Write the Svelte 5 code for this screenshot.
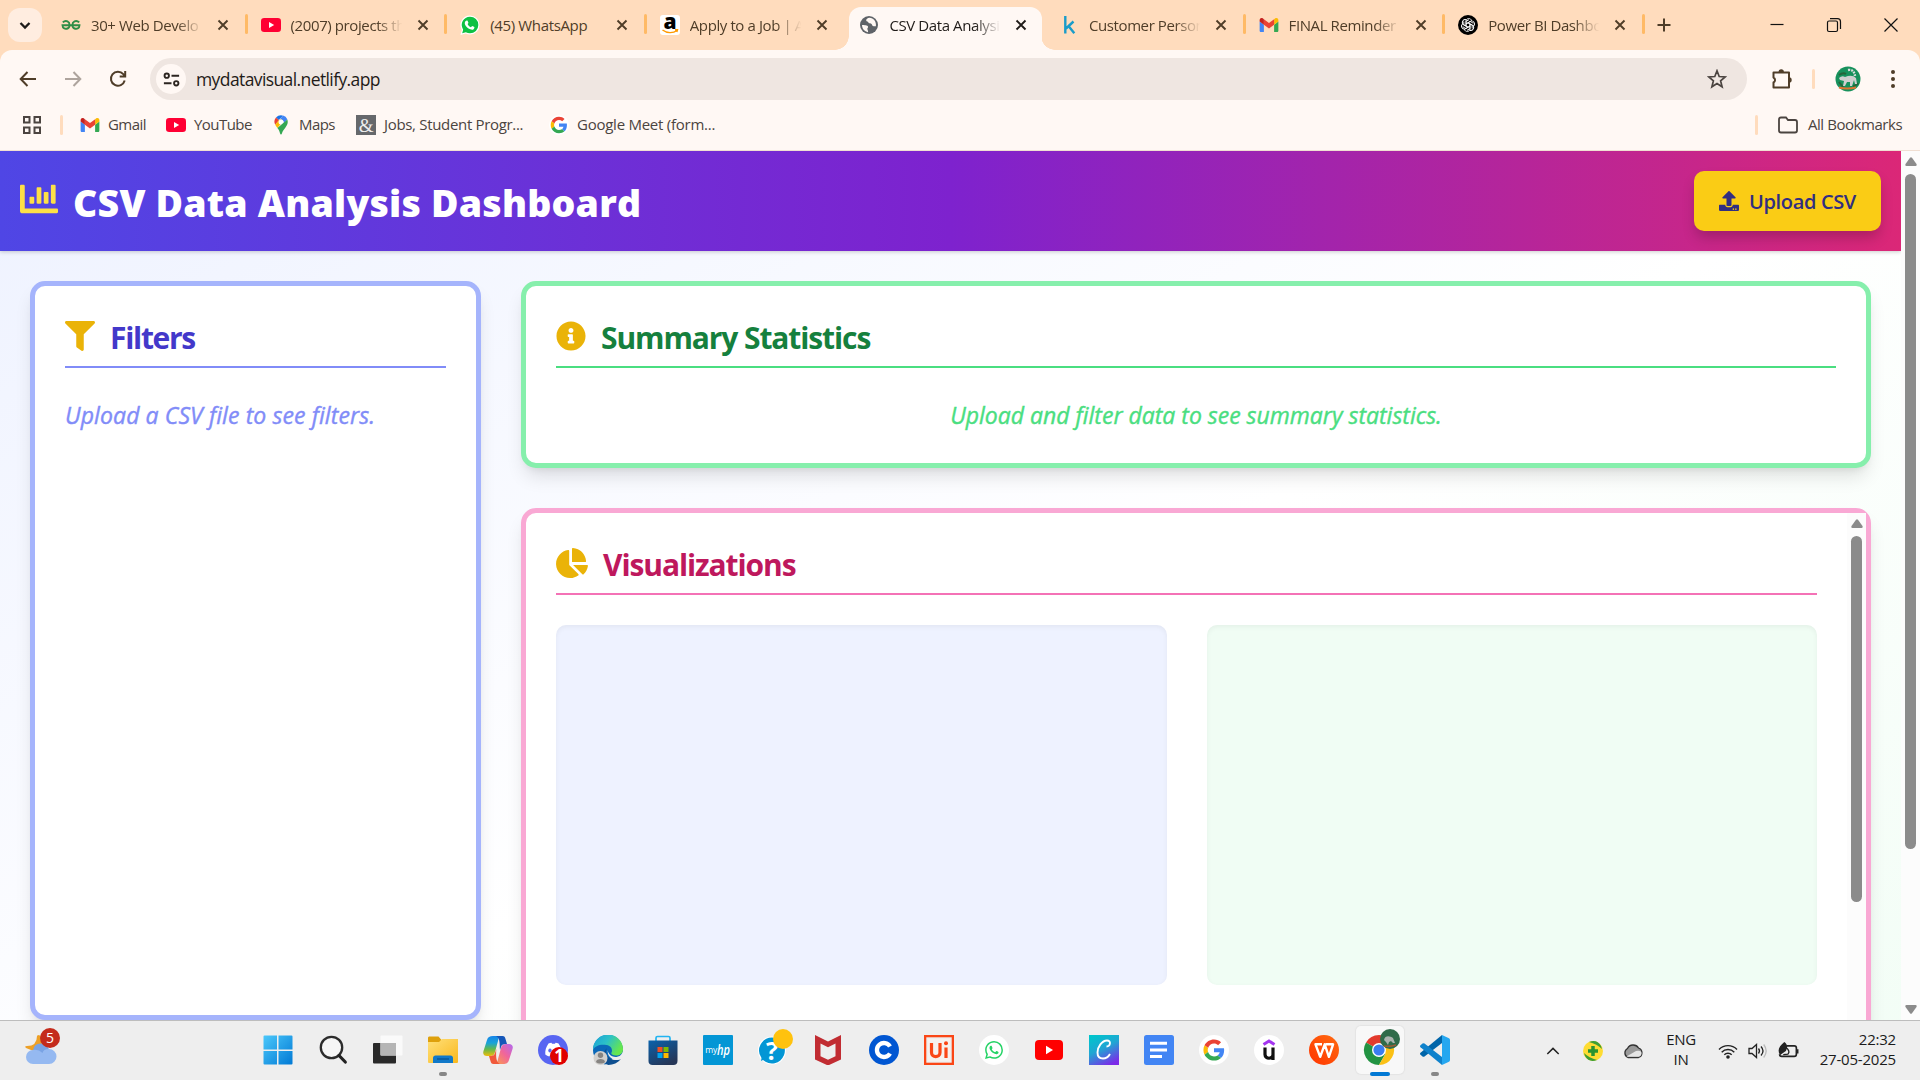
<script>
  const tabs = [
    { icon: 'gfg', title: '30+ Web Develo', sep: true },
    { icon: 'youtube', title: '(2007) projects th', sep: true },
    { icon: 'whatsapp', title: '(45) WhatsApp', sep: true, whole: true },
    { icon: 'amazon', title: 'Apply to a Job | A' },
    { icon: 'globe', title: 'CSV Data Analysi', active: true },
    { icon: 'kaggle', title: 'Customer Person', sep: true },
    { icon: 'gmail', title: 'FINAL Reminder', sep: true },
    { icon: 'openai', title: 'Power BI Dashbo', sep: true }
  ];
  const bookmarks = [
    { icon: 'gmail', title: 'Gmail', cls: 'b-gmail' },
    { icon: 'youtube', title: 'YouTube', cls: 'b-youtube' },
    { icon: 'maps', title: 'Maps', cls: 'b-maps' },
    { icon: 'jobs', title: 'Jobs, Student Progr...', cls: 'b-jobs' },
    { icon: 'google', title: 'Google Meet (form...', cls: 'b-meet' }
  ];
  const apps = ['windows', 'search', 'taskview', 'explorer', 'copilot', 'discord', 'edge', 'store', 'myhp', 'help', 'mcafee', 'coursera', 'uipath', 'wa-round', 'yt-wide', 'canva', 'docs', 'g-round', 'udemy', 'wps', 'chrome', 'vscode'];
</script>

{#snippet icon(name)}
  {#if name === 'gfg'}
    <svg class="fav" viewBox="0 0 20 20"><g fill="none" stroke="#2f8d46" stroke-width="1.9"><path d="M1.800 7.400C3.200 6 5 5.600 6.500 6.300 9.300 7.600 9.300 12.400 6.500 13.500 3.800 14.500 1.600 13 1.500 10.200H18.500C18.400 13 16.200 14.500 13.500 13.500 10.700 12.400 10.700 7.600 13.500 6.300 15 5.600 16.800 6 18.200 7.400"/></g></svg>
  {:else if name === 'youtube'}
    <svg class="fav" viewBox="0 0 20 20"><rect y="3" width="20" height="14" rx="3.200" fill="#ff0033"/><path d="M8 7v6l5.200-3z" fill="#fff"/></svg>
  {:else if name === 'yt-wide'}
    <svg viewBox="0 0 30 30"><rect x="1" y="5" width="28" height="20" rx="4" fill="#f00"/><path d="M12 10.800v8.400l7-4.200z" fill="#fff"/></svg>
  {:else if name === 'whatsapp'}
    <svg class="fav" viewBox="0 0 24 24"><path d="M12 .5A11.500 11.500 0 0 1 12 23.500a11 11 0 0 1-5.200-1.300L.5 23.900l1.700-6A11.500 11.500 0 0 1 12 .5z" fill="#fff"/><path d="M12 2A10 10 0 0 1 12 22a10 10 0 0 1-5-1.400L2.600 21.800l1.200-4.200A10 10 0 0 1 12 2z" fill="#0dc143"/><path d="M8.200 6.500c.6 0 .8.100 1 .6l.9 2.100c.1.500-.8 1.300-1 1.700.7 1.700 2.200 3.100 4 3.800.5-.1 1.100-1.500 1.600-1.500.6.100 2.200 1 2.500 1.200.3.400-.1 2-.9 2.600-.7.600-2 .8-3 .5-3.800-1.100-6.300-3.700-7.400-6.500-.6-1.800.3-4.500 2.300-4.500z" fill="#fff"/></svg>
  {:else if name === 'amazon'}
    <svg class="fav" viewBox="0 0 20 20"><rect width="20" height="20" rx="3" fill="#fff"/><text x="10" y="13.500" text-anchor="middle" class="glyph" font-size="21" font-weight="800">a</text><path d="M2.500 15c4.500 3.400 10.500 3.400 14.500.5M15 14.800l2.500-.1-.7 2.300" fill="none" stroke="#f90" stroke-width="1.400"/></svg>
  {:else if name === 'globe'}
    <svg class="fav" viewBox="0 0 20 20"><circle cx="10" cy="10" r="9" fill="#5f6368"/><path d="M3 10c2.500.2 5.500 0 6 1.500.3 1.500-1 1.500-.6 2.700.3 1 1 1.800.6 3C5.500 16.500 3 13.500 3 10zM10.500 2.800c-2 .3-3.500 1.400-3.300 2.700.3 1.200 1.800.7 2.200 1.900.4 1.500 2.400.3 3.200 1.700.6 1 .7 2.200 2.100 2.200h2.200C17.600 6.500 14.500 3 10.500 2.800z" fill="#fff8f4"/></svg>
  {:else if name === 'kaggle'}
    <svg class="fav" viewBox="0 0 20 20"><path d="M6.300 1v17.500M14.500 6.500l-7.500 7M9.500 11l5.800 7.300" stroke="#1a9cc9" stroke-width="2.400" fill="none"/></svg>
  {:else if name === 'gmail'}
    <svg class="fav" viewBox="49 36 94 78"><path fill="#4285f4" d="M58 108h14V74L52 59v43c0 3.320 2.690 6 6 6"/><path fill="#34a853" d="M120 108h14c3.320 0 6-2.690 6-6V59l-20 15"/><path fill="#fbbc04" d="M120 48v26l20-15v-8c0-7.420-8.470-11.650-14.400-7.200"/><path fill="#ea4335" d="M72 74V48l24 18 24-18v26L96 92"/><path fill="#c5221f" d="M52 51v8l20 15V48l-5.600-4.200c-5.940-4.450-14.400-.22-14.400 7.200"/></svg>
  {:else if name === 'openai'}
    <svg class="fav" viewBox="0 0 20 20"><circle cx="10" cy="10" r="10" fill="#000"/><g fill="none" stroke="#fff" stroke-width=".9">{#each [0, 60, 120, 180, 240, 300] as a}<path transform="rotate({a} 10 10)" d="M8 11V6.200C8 2.800 13 2.500 13.600 5.800M8 8.900l4.200-2.400 3 1.700"/>{/each}</g></svg>
  {:else if name === 'maps'}
    <svg class="fav" viewBox="0 0 20 20"><path d="M10 .3a6.600 6.600 0 0 0-5 2.300L7.700 5 12 .7A6 6 0 0 0 10 .3z" fill="#1a73e8"/><path d="M5 2.600a6.500 6.500 0 0 0-.8 7.200L8 5.300z" fill="#ea4335"/><path d="M12 .6 7.800 5.500a2.900 2.900 0 0 1 4.500 3.600l4-4.800A6.600 6.600 0 0 0 12 .6z" fill="#4285f4"/><path d="M4.200 9.800c.5 1 1.300 2 2.200 3.200l5.900-7a2.900 2.900 0 0 0-4.500-.7z" fill="#fbbc04"/><circle cx="10" cy="7" r="2.500" fill="#fff"/><path d="M16.400 4.500c1 3.500-.2 5.700-2.100 8.200-2 2.600-2.800 3.500-3.300 5.600-.4 1.700-1.600 1.700-2 0-.4-2-1.200-3.400-2.600-5.300z" fill="#34a853"/></svg>
  {:else if name === 'jobs'}
    <svg class="fav" viewBox="0 0 20 20"><rect width="20" height="20" fill="#66686b"/><text x="10" y="16.500" text-anchor="middle" class="serif" font-size="19">&amp;</text></svg>
  {:else if name === 'google' || name === 'g-round'}
    <svg class="fav" viewBox={name === 'google' ? '-5 -5 58 58' : '-10 -10 68 68'}>{#if name === 'g-round'}<circle cx="24" cy="24" r="34" fill="#fff"/>{:else}<circle cx="24" cy="24" r="29" fill="#fff"/>{/if}<path fill="#ea4335" d="M24 9.500c3.540 0 6.710 1.220 9.210 3.600l6.850-6.850C35.900 2.380 30.470 0 24 0 14.620 0 6.510 5.380 2.560 13.220l7.980 6.190C12.430 13.720 17.740 9.500 24 9.500z"/><path fill="#4285f4" d="M46.980 24.550c0-1.570-.15-3.090-.38-4.550H24v9.020h12.940c-.58 2.960-2.260 5.480-4.780 7.180l7.730 6c4.510-4.180 7.090-10.360 7.090-17.650z"/><path fill="#fbbc05" d="M10.530 28.590c-.48-1.450-.76-2.990-.76-4.590s.27-3.140.76-4.590l-7.980-6.190C.92 16.460 0 20.120 0 24c0 3.880.92 7.540 2.560 10.780l7.970-6.190z"/><path fill="#34a853" d="M24 48c6.480 0 11.930-2.130 15.890-5.810l-7.730-6c-2.150 1.450-4.920 2.300-8.160 2.300-6.260 0-11.570-4.220-13.470-9.910l-7.980 6.190C6.510 42.620 14.620 48 24 48z"/></svg>
  {:else if name === 'windows'}
    <svg viewBox="0 0 30 30"><defs><linearGradient id="win" x1="0" y1="0" x2="1" y2="1" gradientUnits="objectBoundingBox"><stop stop-color="#4cc9fb"/><stop offset="1" stop-color="#0078d4"/></linearGradient><mask id="winm"><path d="M.5 1.500a1 1 0 0 1 1-1H14v14H.5zM15.500.5h13a1 1 0 0 1 1 1v13h-14zM.5 16H14v13.500H1.500a1 1 0 0 1-1-1zM15.500 16h14v12.500a1 1 0 0 1-1 1h-13z" fill="#fff"/></mask></defs><rect width="30" height="30" fill="url(#win)" mask="url(#winm)"/></svg>
  {:else if name === 'search'}
    <svg viewBox="0 0 30 30"><circle cx="13.500" cy="12.500" r="10.700" fill="#f6f6f6" stroke="#2c2c2c" stroke-width="2.300"/><path d="m21 20.500 6.300 6.500" stroke="#222" stroke-width="3.200" stroke-linecap="round"/></svg>
  {:else if name === 'taskview'}
    <svg viewBox="0 0 30 30"><rect y="8" width="23" height="20.500" rx="1" fill="#292929"/><rect x="7.500" y=".5" width="22" height="20" rx="1" fill="#fafafa"/><path d="M7.500 8H23v12.500H7.500z" fill="#b5b5b5"/></svg>
  {:else if name === 'explorer'}
    <svg viewBox="0 0 30 30"><defs><linearGradient id="fold" x1="0" y1="0" x2="1" y2="1"><stop stop-color="#ffe07a"/><stop offset="1" stop-color="#f9b81c"/></linearGradient></defs><path d="M0 3c0-1 .7-1.500 1.500-1.500h9L13.500 5H29v4H0z" fill="#dea00c"/><path d="M0 7h11l3-3h16v22.500c0 1-.5 1.500-1.500 1.500h-27C.5 28 0 27.500 0 26.500z" fill="url(#fold)"/><path d="M5 28v-5c0-1.500 1-2.500 2.500-2.500h15c1.500 0 2.500 1 2.500 2.500v5z" fill="#1179c9"/><path d="M9 24h12" stroke="#07508d" stroke-width="1.200"/></svg>
  {:else if name === 'copilot'}
    <svg viewBox="0 0 30 30"><defs><linearGradient id="cp1" x1="0" y1="0" x2="0" y2="1"><stop stop-color="#1684e8"/><stop offset=".35" stop-color="#18a3d9"/><stop offset=".65" stop-color="#60b84e"/><stop offset="1" stop-color="#efbc0a"/></linearGradient><linearGradient id="cp2" x1="1" y1="0" x2="0" y2="1"><stop stop-color="#b26af0"/><stop offset=".45" stop-color="#f0659b"/><stop offset="1" stop-color="#fca343"/></linearGradient></defs><path d="M19.500 1c-4 0-4 3-4.500 5l-3 11c-.8 3-2 4-5 4H4c-3 0-4.500-2-3.500-5L4 5c1-3 2.500-4 6-4z" fill="url(#cp1)"/><path d="M10.500 29c3.500 0 4-2.500 4.500-5l3-11c.8-3 2-4 5-4h3c3 0 4.500 2 3.500 5L26 25c-1 3-2.500 4-6 4z" fill="url(#cp2)"/><path d="M13 1h6.500c2 0 2.500 1 3 3l1.500 5c-3.500 0-5 0-6 3l-1 3c-.5-5 .5-12-4-14z" fill="#1556b8"/><path d="M17 29h-6.500c-2 0-2.500-1-3-3L6 21c3.500 0 5 0 6-3l1.300-4C13 20 12.500 27 17 29z" fill="#f0593b"/></svg>
  {:else if name === 'discord'}
    <svg viewBox="0 0 30 30"><circle cx="15" cy="15" r="15" fill="#5865f2"/><path d="M10.500 8.500c1-.5 2-.7 3-.8l.5 1h3l.5-1c1 .1 2 .3 3 .8 2.500 3.500 3.500 7 3.300 11-1.300 1-2.500 1.500-4 2l-1-1.700c-2 .5-4.500.5-6.500 0l-1 1.700c-1.500-.5-2.800-1-4-2-.3-4 .7-7.500 3.200-11z" fill="#fff"/><ellipse cx="12" cy="15.500" rx="1.700" ry="2" fill="#5865f2"/><circle cx="21" cy="21" r="9" fill="#e00000"/><text x="21" y="27" text-anchor="middle" class="badge-num" font-size="17" font-weight="700">1</text></svg>
  {:else if name === 'edge'}
    <svg viewBox="0 0 30 30"><defs><linearGradient id="eg1" x1="0" y1="0" x2="1" y2=".5"><stop stop-color="#199fd9"/><stop offset=".5" stop-color="#2cc0c8"/><stop offset="1" stop-color="#66e74d"/></linearGradient></defs><circle cx="15" cy="15" r="15" fill="#0b68b9"/><path d="M21 22c4 1 8-2 9-6v14H12z" fill="#eee"/><path d="M0 15A15 15 0 0 1 30 14c.2 4-3 6.500-7 6.500-3.500 0-5.500-1.500-4.500-3 1-1.300 1-6.500-5-7.500C7 9 1.500 11 0 15z" fill="url(#eg1)"/><path d="M14 13c-3 5 1 12 9 12 2 0 4-.5 5-1.200C25 28 20 30 15.500 30 9 29 8 18 14 13z" fill="#0f4f90"/><path d="M15 14c-1 3.500 2.500 8 8 8 2.500 0 4.500-.8 6-1.500L28 24c-7 3-15-2-13-10z" fill="#eee"/><circle cx="7.500" cy="23" r="7" fill="#d2d0ce"/><circle cx="7.500" cy="20.300" r="2.700" fill="#868482"/><path d="M3 27c0-4 9-4 9 0-2 2-7 2-9 0z" fill="#868482"/></svg>
  {:else if name === 'store'}
    <svg viewBox="0 0 30 30"><defs><linearGradient id="st" x1="0" y1="0" x2=".6" y2="1"><stop stop-color="#0a62ac"/><stop offset="1" stop-color="#263758"/></linearGradient></defs><path d="M8 6V3c0-1 .5-1.500 1.500-1.500h11c1 0 1.500.5 1.500 1.500v3" fill="none" stroke="#22b4f1" stroke-width="1.700"/><path d="M.5 5.500h29V26c0 2.500-1.500 4-4 4h-21c-2.500 0-4-1.500-4-4z" fill="url(#st)"/><path fill="#f25022" d="M9.500 12h5v5h-5z"/><path fill="#7fba00" d="M15.500 12h5v5h-5z"/><path fill="#00a4ef" d="M9.500 18h5v5h-5z"/><path fill="#ffb900" d="M15.500 18h5v5h-5z"/></svg>
  {:else if name === 'myhp'}
    <svg viewBox="0 0 30 30"><rect width="30" height="30" rx="1" fill="#0396d5"/><text x="2.300" y="18" class="white" font-size="8.500" textLength="12">my</text><text x="14" y="20" class="white" font-size="15" font-style="italic" font-weight="600" textLength="13" lengthAdjust="spacingAndGlyphs">hp</text></svg>
  {:else if name === 'help'}
    <svg class="spill" viewBox="0 0 30 30"><circle cx="14" cy="15.500" r="14" fill="#fff"/><path d="M14 2.500a13 13 0 1 1-9 22.500L3 26l.5-3A13 13 0 0 1 14 2.500z" fill="#0396d5"/><text x="14" y="24.500" text-anchor="middle" class="white" font-size="25" font-weight="700">?</text><circle cx="25" cy="4" r="10" fill="#ffc20e"/></svg>
  {:else if name === 'mcafee'}
    <svg viewBox="0 0 30 30"><path d="M2 0 15 6.500 28 0v24.500L15 30.500 2 24.500zM7.500 8.500v12.700L15 24.700l7.500-3.500V8.500L15 12.200z" fill="#c12c32" fill-rule="evenodd"/></svg>
  {:else if name === 'coursera'}
    <svg viewBox="0 0 30 30"><circle cx="15" cy="15" r="15" fill="#0056d2"/><path d="M21 11.500a7 7 0 1 0 0 7" fill="none" stroke="#fff" stroke-width="4.300"/></svg>
  {:else if name === 'uipath'}
    <svg viewBox="0 0 30 30"><rect width="30" height="30" fill="#fa4616"/><rect x="2.300" y="2.300" width="25.400" height="25.400" fill="#eee"/><rect x="4" y="4" width="22" height="22" fill="#f6f1ee"/><path d="M7.500 8v9.500c0 5.500 8.500 5.500 8.500 0V8M22 12.500V23" fill="none" stroke="#fa4616" stroke-width="3.200"/><circle cx="22" cy="8.300" r="2" fill="#fa4616"/></svg>
  {:else if name === 'wa-round'}
    <svg viewBox="-8 -8 40 40"><circle cx="12" cy="12" r="20" fill="#fff"/><path fill="#25d366" d="M17.472 14.382c-.297-.149-1.758-.867-2.030-.967-.273-.099-.471-.148-.67.15-.197.297-.767.966-.94 1.164-.173.199-.347.223-.644.075-.297-.15-1.255-.463-2.390-1.475-.883-.788-1.480-1.761-1.653-2.059-.173-.297-.018-.458.13-.606.134-.133.298-.347.446-.52.149-.174.198-.298.298-.497.099-.198.05-.371-.025-.52-.075-.149-.669-1.612-.916-2.207-.242-.579-.487-.5-.669-.51-.173-.008-.371-.01-.57-.01-.198 0-.52.074-.792.372-.272.297-1.040 1.016-1.040 2.479 0 1.462 1.065 2.875 1.213 3.074.149.198 2.096 3.200 5.077 4.487.709.306 1.262.489 1.694.625.712.227 1.360.195 1.871.118.571-.085 1.758-.719 2.006-1.413.248-.694.248-1.289.173-1.413-.074-.124-.272-.198-.57-.347m-5.421 7.403h-.004a9.870 9.870 0 01-5.031-1.378l-.361-.214-3.741.982.998-3.648-.235-.374a9.860 9.860 0 01-1.510-5.260c.001-5.450 4.436-9.884 9.888-9.884 2.640 0 5.122 1.030 6.988 2.898a9.825 9.825 0 012.893 6.994c-.003 5.450-4.437 9.884-9.885 9.884m8.413-18.297A11.815 11.815 0 0012.050 0C5.495 0 .16 5.335.157 11.892c0 2.096.547 4.142 1.588 5.945L.057 24l6.305-1.654a11.882 11.882 0 005.683 1.448h.005c6.554 0 11.890-5.335 11.893-11.893a11.821 11.821 0 00-3.480-8.413Z"/></svg>
  {:else if name === 'canva'}
    <svg viewBox="0 0 30 30"><defs><linearGradient id="cv" x1=".2" y1="0" x2=".7" y2="1"><stop stop-color="#00c4cc"/><stop offset=".45" stop-color="#20a6d3"/><stop offset="1" stop-color="#7b2ae8"/></linearGradient></defs><rect width="30" height="30" fill="url(#cv)"/><path d="M17.500 11.500c4 0 5-6 .5-6-5 0-9.500 6.500-9.500 12 0 4 2.500 6 5.500 6 3 0 5.500-1.800 7-4.500" fill="none" stroke="#fff" stroke-width="1.900"/></svg>
  {:else if name === 'docs'}
    <svg viewBox="0 0 30 30"><rect width="30" height="30" rx="2.500" fill="#4285f4"/><path d="M6 8.300h17M6 15h17M6 21.500h12" stroke="#fff" stroke-width="3"/></svg>
  {:else if name === 'udemy'}
    <svg viewBox="0 0 30 30"><circle cx="15" cy="15" r="15" fill="#fff"/><path d="M9.500 9.500 15 6l5.500 3.500" fill="none" stroke="#a435f0" stroke-width="3"/><path d="M11 12.500v7c0 5 8 5 8 0v-7M19 18v7" fill="none" stroke="#111" stroke-width="3.200"/></svg>
  {:else if name === 'wps'}
    <svg viewBox="0 0 30 30"><defs><linearGradient id="wp" x1="0" y1="1" x2="1" y2="0"><stop stop-color="#ff3400"/><stop offset="1" stop-color="#ff6b10"/></linearGradient></defs><circle cx="15" cy="15" r="15" fill="url(#wp)"/><path d="M13 9.300H6.500l4.700 12.500 4.500-12.500 4.200 12.500 4.200-12.500h-7.500" fill="none" stroke="#fff" stroke-width="2.400" stroke-linejoin="round"/></svg>
  {:else if name === 'chrome'}
    <svg class="spill" viewBox="0 0 30 30"><path d="M15 15 2 7.500A15 15 0 0 1 28 7.500z" fill="#e33b2e"/><path d="M15 15 2 7.500A15 15 0 0 0 15 30l6.500-11.200z" fill="#229342"/><path d="M15 15 28 7.500A15 15 0 0 1 15 30l6.500-11.200z" fill="#fbc116"/><path d="M15 8h13.200l-6 5z" fill="#e33b2e"/><circle cx="15" cy="15" r="7" fill="#fff"/><circle cx="15" cy="15" r="5.600" fill="#3a7df0"/><circle cx="26" cy="4" r="10" fill="#2f6b49"/><path d="M20 5c1-5 6-4 9-2l2 5h-2l-2-2-2 1-1 3-2-3z" fill="#aab3ae"/><path d="M20 11q6 1 12-1" stroke="#9b5b36" stroke-width="1.600" fill="none"/></svg>
  {:else if name === 'vscode'}
    <svg viewBox="0 0 30 30"><path d="M22 0 29 3.300q1 .5 1 1.700v20q0 1.200-1 1.700L22 30z" fill="#25a7f0"/><path d="M22 0v8L4.500 21.500q-1 .6-2 0L.5 19.800q-1-1 0-2z" fill="#0065a9"/><path d="M22 30v-8L4.500 8.500q-1-.6-2 0L.5 10.200q-1 1 0 2z" fill="#0f82cc"/></svg>
  {/if}
{/snippet}

{#snippet lemur()}
  <svg class="avatar" viewBox="0 0 26 26"><circle cx="13" cy="13" r="12.500" fill="#17915c"/><path d="M4 9q4-3 7-1M18 20q3 0 5-3M4 16l4 5" stroke="#26643b" stroke-width="2" fill="none"/><path d="M13 4q6-1 7 6" stroke="#ddd" stroke-width="2.400" stroke-dasharray="2 1" fill="none"/><path d="M4 12q3-3 6-1 7-3 11 1l1 6h-2l-1-4-2 6h-2v-4h-3l-2 4H8l1-5-4-1z" fill="#cfcfcf"/><path d="M4 21.500q8 2 17 0" stroke="#df7433" stroke-width="2" fill="none"/></svg>
{/snippet}

<div class="screen">
  <div class="tabstrip">
    <div class="tab-search"><svg viewBox="0 0 20 20"><path d="m5.500 8 4.500 4.500L14.500 8" fill="none" stroke="#1d1b19" stroke-width="2.300"/></svg></div>
    {#each tabs as tab}
      <div class="tab" class:active={tab.active} class:sep={tab.sep}>
        {@render icon(tab.icon)}
        <span class="tab-title" class:whole={tab.whole}>{tab.title}</span>
        <svg class="close" viewBox="0 0 12 12"><path d="m1.500 1.500 9 9m0-9-9 9" stroke="currentColor" stroke-width="1.900"/></svg>
      </div>
    {/each}
    <svg class="newtab" viewBox="0 0 14 14"><path d="M7 .5v13M.5 7h13" stroke="#4f3d28" stroke-width="2"/></svg>
    <div class="window-buttons">
      <svg viewBox="0 0 16 16"><path d="M1.500 7.500h13" stroke="#111" stroke-width="1.200"/></svg>
      <svg viewBox="0 0 16 16"><g fill="none" stroke="#111" stroke-width="1.200"><rect x="1.500" y="4" width="10" height="10.500" rx="1.500"/><path d="M4 1.700h7.500c2 0 3 1 3 3V12"/></g></svg>
      <svg viewBox="0 0 16 16"><path d="m1.500 1.500 13 13m0-13-13 13" stroke="#111" stroke-width="1.200"/></svg>
    </div>
  </div>

  <div class="chrome-body">
    <div class="toolbar">
      <div class="nav">
        <svg viewBox="0 0 20 20"><path d="M18 10H3M9.500 3 2.700 10l6.800 7" fill="none" stroke="#4f3d28" stroke-width="2"/></svg>
        <svg viewBox="0 0 20 20"><path d="M2 10h15M10.500 3l6.800 7-6.800 7" fill="none" stroke="#aea49d" stroke-width="2"/></svg>
        <svg viewBox="0 0 20 20"><path d="M16.700 11.500A7 7 0 1 1 15.300 5.200L17 7M17.200 2v5.500h-5.500" fill="none" stroke="#4f3d28" stroke-width="2"/></svg>
      </div>
      <div class="omnibox">
        <div class="site-info"><svg viewBox="0 0 20 20"><g fill="none" stroke="#2c2520" stroke-width="2"><circle cx="5" cy="6" r="2.300"/><path d="M10 6h8M2 14h8"/><circle cx="15" cy="14" r="2.300"/></g></svg></div>
        <span class="url">mydatavisual.netlify.app</span>
        <svg class="star" viewBox="0 0 20 20"><path d="m10 1.800 2.200 5.700 6 .4-4.600 3.900 1.500 6-5.100-3.300-5.100 3.300 1.500-6L1.800 7.900l6-.4z" fill="none" stroke="#4b4440" stroke-width="1.700"/></svg>
      </div>
      <svg class="puzzle" viewBox="0 0 22 22"><path d="M2.500 4.500h15.500v15H2.500v-5a2.800 2.800 0 0 0 0-5z" fill="none" stroke="#4f3d28" stroke-width="2" stroke-linejoin="round"/><path d="M7.500 4a2.700 2.700 0 0 1 5.400 0M18 9.200a2.700 2.700 0 0 1 0 5.400" fill="#4f3d28"/></svg>
      <i class="bar"></i>
      {@render lemur()}
      <svg class="dots" viewBox="0 0 6 20"><g fill="#4f3d28"><circle cx="3" cy="3" r="2"/><circle cx="3" cy="10" r="2"/><circle cx="3" cy="17" r="2"/></g></svg>
    </div>
    <div class="bookmarks">
      <svg class="apps-grid" viewBox="0 0 18 18"><g fill="none" stroke="#4b4440" stroke-width="2"><path d="M1 1h5.500v5.500H1zM11.500 1H17v5.500h-5.500zM1 11.500h5.500V17H1zM11.500 11.500H17V17h-5.500z"/></g></svg>
      <i class="bar"></i>
      {#each bookmarks as b}
        <div class="bookmark {b.cls}">{@render icon(b.icon)}<span>{b.title}</span></div>
      {/each}
      <i class="bar right"></i>
      <svg class="folder" viewBox="0 0 20 18"><path d="M1 3.500q0-2 2-2h5l2 2.500h7q2 0 2 2v8.500q0 2-2 2H3q-2 0-2-2z" fill="none" stroke="#4b4440" stroke-width="1.800"/></svg>
      <span class="all">All Bookmarks</span>
    </div>
  </div>

  <div class="viewport">
    <div class="page">
      <header>
        <h1><svg viewBox="0 0 512 512"><path d="M332.800 320h38.400c6.400 0 12.800-6.400 12.800-12.800V172.800c0-6.400-6.400-12.800-12.800-12.800h-38.400c-6.400 0-12.800 6.400-12.800 12.800v134.400c0 6.400 6.400 12.800 12.800 12.800zm96 0h38.400c6.400 0 12.800-6.400 12.800-12.800V76.800c0-6.400-6.400-12.800-12.800-12.800h-38.400c-6.400 0-12.800 6.400-12.800 12.800v230.400c0 6.400 6.400 12.800 12.800 12.800zm-288 0h38.400c6.400 0 12.800-6.400 12.800-12.800v-70.400c0-6.400-6.400-12.800-12.800-12.800h-38.400c-6.400 0-12.800 6.400-12.800 12.800v70.400c0 6.400 6.400 12.800 12.800 12.800zm96 0h38.400c6.400 0 12.800-6.400 12.800-12.800V108.800c0-6.400-6.400-12.800-12.800-12.800h-38.400c-6.400 0-12.800 6.400-12.800 12.800v198.400c0 6.400 6.400 12.800 12.800 12.800zM496 384H64V80c0-8.840-7.160-16-16-16H16C7.160 64 0 71.160 0 80v336c0 17.670 14.330 32 32 32h464c8.840 0 16-7.160 16-16v-32c0-8.840-7.160-16-16-16z"/></svg><span>CSV Data Analysis Dashboard</span></h1>
        <button><svg viewBox="0 0 512 512"><path d="M296 384h-80c-13.300 0-24-10.700-24-24V192h-87.700c-17.800 0-26.700-21.500-14.100-34.100L242.300 5.700c7.500-7.500 19.800-7.500 27.300 0l152.200 152.200c12.600 12.600 3.700 34.100-14.100 34.100H320v168c0 13.300-10.700 24-24 24zm216-8v112c0 13.300-10.700 24-24 24H24c-13.300 0-24-10.700-24-24V376c0-13.300 10.700-24 24-24h136v8c0 30.900 25.100 56 56 56h80c30.900 0 56-25.100 56-56v-8h136c13.300 0 24 10.700 24 24zm-124 88c0-11-9-20-20-20s-20 9-20 20 9 20 20 20 20-9 20-20zm64 0c0-11-9-20-20-20s-20 9-20 20 9 20 20 20 20-9 20-20z"/></svg><span>Upload CSV</span></button>
      </header>
      <main>
        <section class="card filters">
          <h2><svg viewBox="0 0 512 512"><path d="M487.976 0H24.028C2.710 0-8.047 25.866 7.058 40.971L192 225.941V432c0 7.831 3.821 15.170 10.237 19.662l80 55.980C298.020 518.690 320 507.493 320 487.980V225.941l184.947-184.970C520.021 25.896 509.338 0 487.976 0z"/></svg><span>Filters</span></h2>
          <p>Upload a CSV file to see filters.</p>
        </section>
        <div class="column">
          <section class="card summary">
            <h2><svg viewBox="0 0 512 512"><path d="M256 8C119.043 8 8 119.083 8 256c0 136.997 111.043 248 248 248s248-111.003 248-248C504 119.083 392.957 8 256 8zm0 110c23.196 0 42 18.804 42 42s-18.804 42-42 42-42-18.804-42-42 18.804-42 42-42zm56 254c0 6.627-5.373 12-12 12h-88c-6.627 0-12-5.373-12-12v-24c0-6.627 5.373-12 12-12h12v-64h-12c-6.627 0-12-5.373-12-12v-24c0-6.627 5.373-12 12-12h64c6.627 0 12 5.373 12 12v100h12c6.627 0 12 5.373 12 12v24z"/></svg><span>Summary Statistics</span></h2>
            <p>Upload and filter data to see summary statistics.</p>
          </section>
          <section class="card visuals">
            <div class="visuals-body">
              <h2><svg class="pie" viewBox="0 0 544 512"><path d="M527.790 288H290.500l158.030 158.030c6.040 6.040 15.980 6.530 22.190.68 38.700-36.460 65.320-85.610 73.130-140.860 1.340-9.460-6.510-17.850-16.060-17.850zm-15.830-64.800C503.720 103.740 408.260 8.280 288.800.04 279.680-.59 272 7.100 272 16.240V240h223.770c9.140 0 16.820-7.680 16.190-16.800zM224 288V50.710c0-9.550-8.390-17.400-17.840-16.060C86.990 51.490-4.100 155.600.14 280.370 4.500 408.510 114.830 513.590 243.030 511.980c50.400-.63 96.970-16.870 135.260-44.030 7.900-5.600 8.420-17.230 1.570-24.080L224 288z"/></svg><span>Visualizations</span></h2>
              <div class="charts"><div class="chart blue"></div><div class="chart green"></div></div>
            </div>
            <div class="scroll inner"><svg viewBox="0 0 12 9"><path d="M5 .8q1-1 2 0L11.500 7q.7 2-1 2h-9q-1.700 0-1-2z"/></svg><i></i></div>
          </section>
        </div>
      </main>
    </div>
    <div class="scroll outer"><svg viewBox="0 0 12 9"><path d="M5 .8q1-1 2 0L11.500 7q.7 2-1 2h-9q-1.700 0-1-2z"/></svg><i></i><svg class="down" viewBox="0 0 12 9"><path d="M5 .8q1-1 2 0L11.500 7q.7 2-1 2h-9q-1.700 0-1-2z"/></svg></div>
  </div>

  <div class="taskbar">
    <div class="weather">
      <svg viewBox="0 0 36 38"><path d="M13 7q9 1 10 9L11 24 1 20q-2-2 1-2 10 0 10-10z" fill="#eda027"/><path d="M8 36a7 7 0 0 1 0-14h.5A8.500 8.500 0 0 1 24 21a7.500 7.500 0 1 1 0 15z" fill="#95b9f1"/><path d="M8 22a8 8 0 0 1 15.500-1q-5 0-6 4-4-4-9.500-3z" fill="#79a3e4"/><circle cx="25" cy="10" r="10" fill="#c42b1c"/><text x="25" y="15" text-anchor="middle" class="white" font-size="14">5</text></svg>
    </div>
    <div class="apps">
      {#each apps as app}
        <div class="app {app}">{@render icon(app)}</div>
      {/each}
    </div>
    <div class="tray">
      <svg class="chev" viewBox="0 0 16 16"><path d="m1.500 11.500 6.500-6.500 6.500 6.500" fill="none" stroke="#222" stroke-width="1.700"/></svg>
      <svg class="plus" viewBox="0 0 20 20"><circle cx="10" cy="10" r="10" fill="#fedc32"/><path d="M6 1q8-3 12 4l1 3q-5-5-13-7zM14 19Q6 22 2 15l-1-3q5 5 13 7z" fill="#3d9e35"/><path d="M10 5v10M5 10h10" stroke="#299330" stroke-width="3.500"/></svg>
      <svg class="cloud" viewBox="0 0 22 16"><path d="M6 14.500a5 5 0 0 1-.5-9A6.300 6.300 0 0 1 16.500 5a5 5 0 0 1 0 9.500z" fill="#999" stroke="#333" stroke-width="1.300"/><path d="M4.500 13.500 14 8q6-1 5.500 3-.5 2.700-3 2.700H6z" fill="#e5e5e5"/></svg>
      <div class="lang"><span>ENG</span><span>IN</span></div>
      <svg class="wifi" viewBox="0 0 20 16"><g fill="none" stroke="#222" stroke-width="1.400"><path d="M1 6.500a12.500 12.500 0 0 1 18 0M3.700 9.200a8.800 8.800 0 0 1 12.600 0M6.300 11.800a5.200 5.200 0 0 1 7.400 0"/></g><circle cx="10" cy="14" r="1.800" fill="#222"/></svg>
      <svg class="sound" viewBox="0 0 20 16"><g fill="none" stroke="#222" stroke-width="1.300"><path d="M1 5.500h3L8.500 1.500v13L4 10.500H1zM10.500 5.500q2 2.500 0 5M13 3.500q4 4.500 0 9"/><path d="M15.700 1.500q5 6.500 0 13" stroke="#bbb"/></g></svg>
      <svg class="battery" viewBox="0 0 20 16"><path d="M8 3.700h7.500q2 0 2 2v6q0 2-2 2H3.500q-2 0-2-2M18.700 7v4" fill="none" stroke="#222" stroke-width="1.600"/><path d="M6 0c3 2 3.500 5 1.500 8.500L2 12.500C-1 8 1 4 6 0z" fill="#222"/><path d="M7.500 5Q12 9 9.500 11.500L5 12" fill="none" stroke="#222" stroke-width="1.300"/></svg>
      <div class="clock"><span class="time">22:32</span><span class="date">27-05-2025</span></div>
    </div>
  </div>
</div>

<style>
  :global(body) { margin: 0; overflow: hidden; }
  * { box-sizing: border-box; }
  svg { display: block; flex: none; }
  h1, h2, p { margin: 0; }
  .screen { width: 1920px; height: 1080px; display: flex; flex-direction: column; overflow: hidden; font-family: "Open Sans", "Noto Sans", sans-serif; background: #ffdcbd; }
  .glyph { font-family: "Open Sans", sans-serif; fill: #000; }
  .serif { font-family: "Liberation Serif", serif; fill: #eee; }
  .white, .badge-num { font-family: "Open Sans", sans-serif; fill: #fff; }

  .tabstrip { height: 50px; flex: none; display: flex; align-items: stretch; color: #4f3d28; }
  .tab-search { width: 34px; height: 34px; margin: 8px 8px 0 8px; border-radius: 12px; background: #ffede0; display: grid; place-items: center; flex: none; }
  .tab-search svg { width: 20px; }
  .tab { width: 199.600px; height: 50px; flex: none; display: flex; align-items: center; padding-left: 11px; position: relative; }
  .tab.sep::after { content: ""; position: absolute; right: 2px; top: 14px; width: 3px; height: 20px; border-radius: 2px; background: #ffba66; }
  .fav { width: 20px; height: 20px; }
  .tab-title { width: 116px; margin-left: 10px; white-space: nowrap; font-size: 15px; letter-spacing: -.4px; line-height: 24px; mask-image: linear-gradient(90deg, #000 74%, transparent 96%); }
  .tab-title.whole { mask-image: none; letter-spacing: -.35px; }
  .close { width: 12px; height: 12px; margin-left: 10px; }
  .active { color: #1f1b18; }
  .active::before { content: ""; position: absolute; z-index: 0; left: 1px; right: 6px; top: 7px; bottom: 0; border-radius: 12px 12px 0 0; background: #fff8f4; }
  .active::after { content: ""; position: absolute; left: -13px; right: -7px; bottom: 0; height: 14px; background: radial-gradient(circle at 0 0, transparent 13.500px, #fff8f4 14px) left / 14px 14px no-repeat, radial-gradient(circle at 100% 0, transparent 13.500px, #fff8f4 14px) right / 14px 14px no-repeat; }
  .active > :global(*) { position: relative; z-index: 1; }
  .newtab { width: 14px; margin-left: 10px; }
  .window-buttons { margin-left: auto; display: flex; gap: 41px; align-items: center; padding-right: 21px; }
  .window-buttons svg { width: 16px; }

  .chrome-body { height: 101px; flex: none; background: #fff8f4; border-radius: 12px 12px 0 0; border-bottom: 1px solid #f0dfd3; }
  .toolbar { height: 58px; display: flex; align-items: center; }
  .nav { display: flex; gap: 25px; padding-left: 18px; width: 150px; flex: none; }
  .nav svg { width: 20px; }
  .omnibox { width: 1597px; height: 42px; border-radius: 21px; background: #efe6e1; display: flex; align-items: center; flex: none; padding-left: 6px; }
  .site-info { width: 30px; height: 30px; border-radius: 50%; background: #fff8f4; display: grid; place-items: center; }
  .site-info svg { width: 19px; }
  .url { margin-left: 10px; font-size: 17.500px; letter-spacing: -.6px; color: #1f1b18; }
  .star { width: 20px; margin-left: auto; margin-right: 20px; }
  .puzzle { width: 22px; margin-left: 24px; }
  .bar { width: 3px; height: 20px; border-radius: 2px; background: #ffdcbd; flex: none; }
  .toolbar .bar { margin-left: 19px; }
  .avatar { width: 26px; margin-left: 20px; }
  .dots { width: 6px; margin-left: 29px; }
  .bookmarks { height: 34px; display: flex; align-items: center; font-size: 15px; letter-spacing: -.55px; color: #4b4440; padding-left: 23px; }
  .bookmarks span { margin-top: -2px; }
  .apps-grid { width: 18px; margin-right: 19px; }
  .bookmark { display: flex; align-items: center; gap: 8px; flex: none; white-space: nowrap; }
  .b-gmail { width: 86px; margin-left: 17px; }
  .b-youtube { width: 105px; }
  .b-maps { width: 85px; }
  .b-jobs { width: 193px; letter-spacing: -.32px; }
  .b-meet { letter-spacing: -.25px; }
  .bar.right { margin-left: auto; }
  .folder { width: 20px; margin-left: 20px; }
  .all { width: 94px; margin: 0 18px 0 10px; white-space: nowrap; letter-spacing: -.45px; }

  .viewport { height: 869px; flex: none; display: flex; overflow: hidden; }
  .page { width: 1901px; height: 1060px; flex: none; background: linear-gradient(to bottom right, #eef2ff, #fff, #f0fdf4); }
  header { height: 100px; display: flex; justify-content: space-between; align-items: center; padding: 0 20px; background: linear-gradient(90deg, #4f46e5, #7e22ce, #db2777); box-shadow: 0 1px 4px rgba(0, 0, 0, .2); }
  h1 { display: flex; align-items: center; color: #fff; font-size: 37.500px; line-height: 50px; font-weight: 800; letter-spacing: .2px; }
  h1 svg { width: 38px; height: 38px; fill: #fde047; margin: 0 15px 5px 0; }
  h1 span { white-space: nowrap; margin-top: 4px; }
  button { width: 187px; height: 60px; border: 0; border-radius: 10px; background: #facc15; color: #312e81; display: flex; align-items: center; padding: 0 0 0 25px; font: 600 20px "Open Sans", sans-serif; letter-spacing: -.35px; box-shadow: 0 8px 14px -2px rgba(0, 0, 0, .22); white-space: nowrap; }
  button svg { width: 20px; fill: #312e81; margin-right: 10px; }
  main { display: grid; grid-template-columns: 451px 1fr; gap: 40px; padding: 30px; }
  .card { border: 5px solid; border-radius: 15px; background: #fff; box-shadow: 0 12px 19px -4px rgba(0, 0, 0, .12), 0 5px 8px -5px rgba(0, 0, 0, .1); }
  .filters { height: 739px; border-color: #a5b4fc; padding: 30px; }
  .column { display: flex; flex-direction: column; gap: 40px; }
  .summary { height: 187px; border-color: #86efac; padding: 30px; }
  .visuals { height: 625px; border-color: #f9a8d4; display: flex; }
  .visuals-body { flex: 1; padding: 30px; }
  h2 { height: 52px; display: flex; align-items: flex-start; border-bottom: 2px solid; font-size: 30px; line-height: 40px; font-weight: 700; letter-spacing: -1.100px; white-space: nowrap; }
  h2 svg { width: 30px; height: 30px; margin-right: 15px; margin-top: 5px; fill: #eab308; }
  h2 svg.pie { width: 32px; margin-right: 15px; }
  h2 span { margin-top: 2px; }
  .filters h2 { color: #4338ca; border-color: #818cf8; letter-spacing: -1.300px; }
  .summary h2 { color: #15803d; border-color: #4ade80; }
  .visuals h2 { color: #be185d; border-color: #f472b6; }
  p { margin-top: 30px; font-size: 23px; line-height: 35px; font-style: italic; font-weight: 500; letter-spacing: 0; white-space: nowrap; -webkit-text-stroke: .4px currentColor; }
  .filters p { color: #818cf8; letter-spacing: .1px; }
  .summary p { color: #4ade80; text-align: center; }
  .charts { display: grid; grid-template-columns: 1fr 1fr; gap: 40px; margin-top: 30px; }
  .chart { height: 360px; border-radius: 10px; box-shadow: inset 0 2px 5px rgba(0, 0, 0, .05); }
  .blue { background: #eef2ff; }
  .green { background: #f0fdf4; }
  .scroll { width: 19px; flex: none; background: #fcfcfc; display: flex; flex-direction: column; align-items: center; }
  .scroll svg { width: 12px; margin-top: 6px; fill: #8b8b8b; }
  .scroll i { width: 11px; border-radius: 6px; background: #8b8b8b; margin-top: 8px; }
  .inner i { height: 366px; }
  .outer i { height: 675px; }
  .scroll .down { margin: auto 0 6px; transform: rotate(180deg); }

  .taskbar { height: 60px; flex: none; background: #eee; border-top: 1px solid #bdbdbd; display: flex; color: #1b1b1b; font-size: 15px; }
  .weather { width: 250px; padding: 7px 0 0 25px; }
  .weather svg { width: 36px; }
  .apps { display: flex; }
  .app { width: 55.100px; display: flex; justify-content: center; padding-top: 14px; position: relative; }
  .app :global(svg) { width: 30px; height: 30px; position: relative; }
  .app :global(.spill) { overflow: visible; }
  .chrome::before { content: ""; position: absolute; left: 4px; top: 5px; width: 48px; height: 48px; border-radius: 5px; background: #f8f8f8; box-shadow: 0 0 1px 1px #e4e4e4; }
  .explorer::after, .vscode::after, .chrome::after { content: ""; position: absolute; left: 24px; bottom: 4px; width: 8px; height: 4px; border-radius: 2px; background: #868686; }
  .chrome::after { left: 18px; width: 20px; background: #0078d4; }
  .tray { flex: 1; display: flex; align-items: center; letter-spacing: -.3px; }
  .chev { width: 14px; margin-left: 84px; }
  .plus { width: 20px; margin-left: 23px; }
  .cloud { width: 22px; margin-left: 19px; }
  .lang { display: flex; flex-direction: column; align-items: center; line-height: 20px; width: 40px; margin: -3px 0 0 17px; }
  .wifi { width: 20px; margin-left: 17px; }
  .sound { width: 20px; margin-left: 10px; }
  .battery { width: 21px; margin-left: 10px; }
  .clock { display: flex; flex-direction: column; align-items: flex-end; line-height: 20px; margin: -4px 24px 0 auto; white-space: nowrap; letter-spacing: -.2px; }
</style>
